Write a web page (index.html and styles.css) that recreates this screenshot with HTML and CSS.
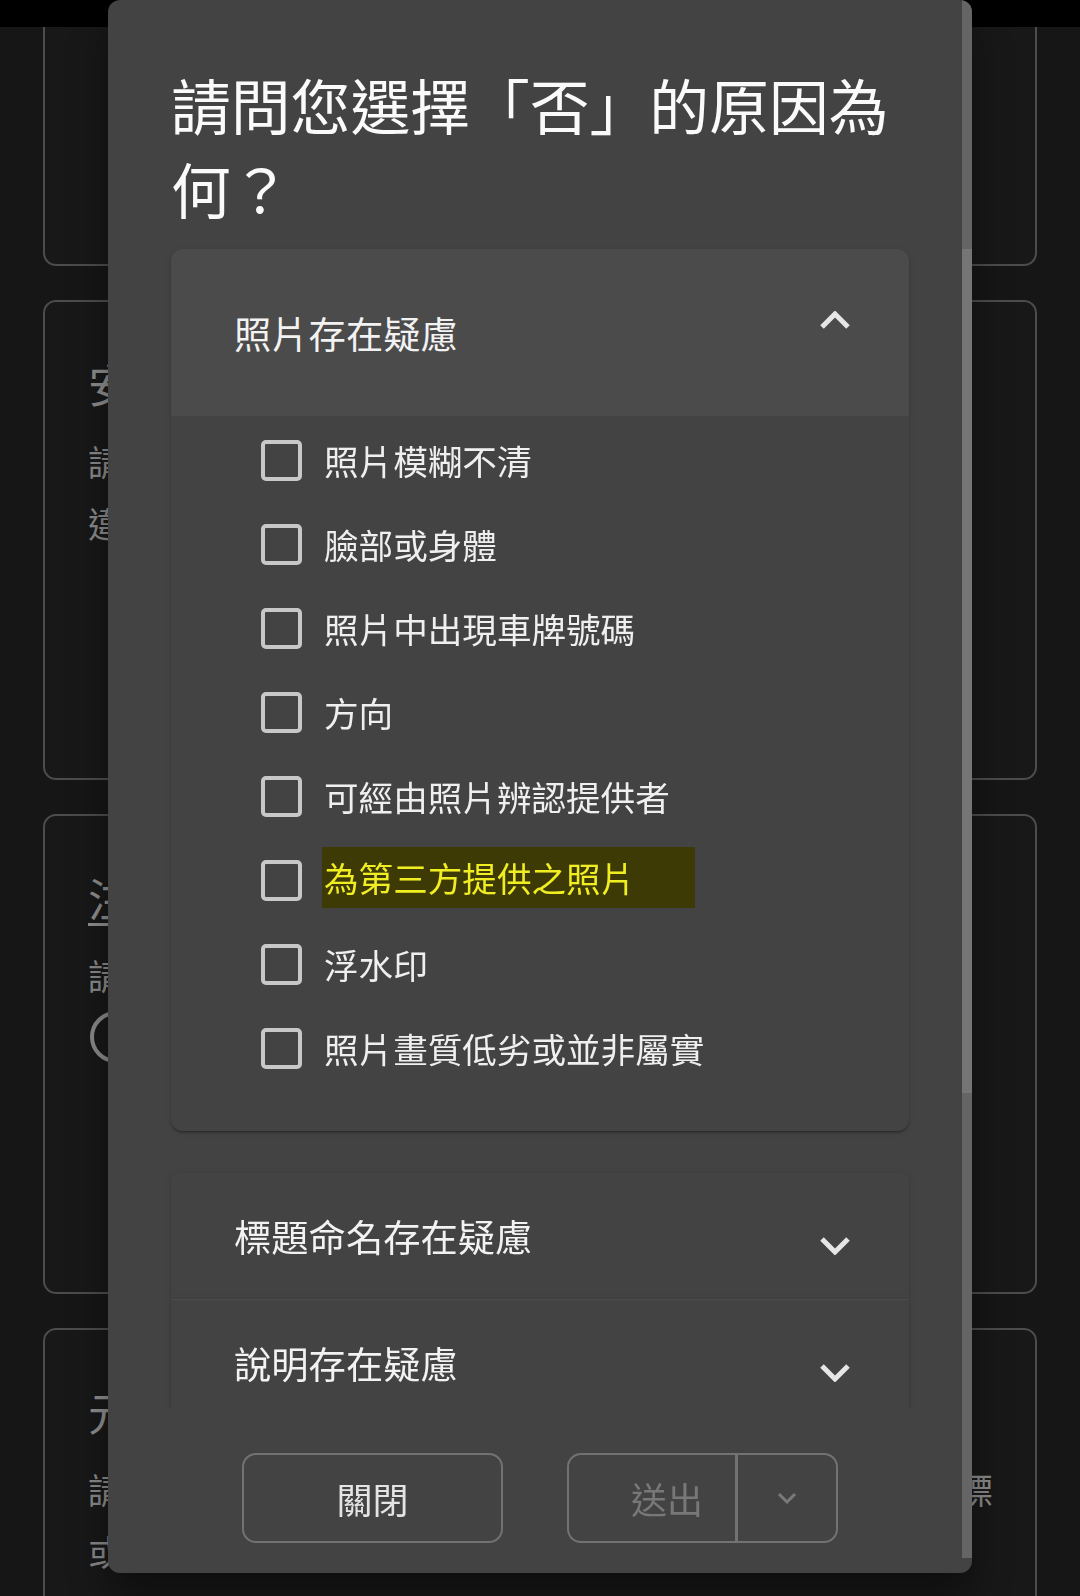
FILE: index.html
```html
<!DOCTYPE html>
<html lang="zh-Hant">
<head>
<meta charset="utf-8">
<title>請問您選擇「否」的原因為何？</title>
<link rel="stylesheet" href="styles.css">
</head>
<body>
<div class="statusbar"></div>
<main class="page">
  <section class="card card-first"></section>
  <section class="card card-mid">
    <h2 class="card-title">安全</h2>
    <p class="card-text">請確</p>
    <p class="card-text">違反</p>
  </section>
  <section class="card card-mid">
    <h2 class="card-title underline">注意</h2>
    <p class="card-text">請選</p>
    <span class="radio"></span>
  </section>
  <section class="card card-last">
    <h2 class="card-title">元件</h2>
    <p class="card-text split-row"><span>請確</span><span>標</span></p>
    <p class="card-text">或說</p>
  </section>
</main>

<div class="dialog" role="dialog">
  <div class="scrollbar"><div class="thumb"></div></div>
  <h1 class="dialog-title">請問您選擇「否」的原因為何？</h1>
  <div class="dialog-content">
    <div class="accordion expanded">
      <div class="acc-header">
        <span class="acc-label">照片存在疑慮</span>
        <svg class="chev chev-up" width="30" height="18" viewBox="0 0 30 18"><polyline points="2,16 15,3 28,16" fill="none" stroke="#e6e6e6" stroke-width="5"/></svg>
      </div>
      <div class="acc-details">
        <label class="option"><span class="box"></span><span class="opt-text">照片模糊不清</span></label>
        <label class="option"><span class="box"></span><span class="opt-text">臉部或身體</span></label>
        <label class="option"><span class="box"></span><span class="opt-text">照片中出現車牌號碼</span></label>
        <label class="option"><span class="box"></span><span class="opt-text">方向</span></label>
        <label class="option"><span class="box"></span><span class="opt-text">可經由照片辨認提供者</span></label>
        <label class="option"><span class="box"></span><span class="opt-text marked">為第三方提供之照片</span></label>
        <label class="option"><span class="box"></span><span class="opt-text">浮水印</span></label>
        <label class="option"><span class="box"></span><span class="opt-text">照片畫質低劣或並非屬實</span></label>
      </div>
    </div>
    <div class="acc-group">
      <div class="accordion">
        <div class="acc-header collapsed">
          <span class="acc-label">標題命名存在疑慮</span>
          <svg class="chev chev-down" width="30" height="18" viewBox="0 0 30 18"><polyline points="2,2 15,15 28,2" fill="none" stroke="#e6e6e6" stroke-width="5"/></svg>
        </div>
      </div>
      <div class="accordion divided">
        <div class="acc-header collapsed">
          <span class="acc-label">說明存在疑慮</span>
          <svg class="chev chev-down" width="30" height="18" viewBox="0 0 30 18"><polyline points="2,2 15,15 28,2" fill="none" stroke="#e6e6e6" stroke-width="5"/></svg>
        </div>
      </div>
    </div>
  </div>
  <div class="dialog-actions">
    <button class="btn btn-close">關閉</button>
    <div class="split">
      <button class="split-main">送出</button>
      <span class="split-divider"></span>
      <button class="split-menu"><svg width="20" height="12" viewBox="0 0 20 12"><polyline points="2,2 10,10 18,2" fill="none" stroke="#7a7a7a" stroke-width="3"/></svg></button>
    </div>
  </div>
</div>
</body>
</html>
```
FILE: styles.css
```css
* { box-sizing: border-box; }
html, body { margin: 0; padding: 0; }
body {
  width: 1080px;
  height: 1596px;
  overflow: hidden;
  background: #161616;
  font-family: "Noto Sans CJK TC", "Noto Sans", sans-serif;
  color: #8c8c8c;
}
.statusbar {
  position: fixed;
  left: 0; top: 0;
  width: 1080px;
  height: 27px;
  background: #000;
  z-index: 2;
}
.page {
  display: flex;
  flex-direction: column;
  gap: 34px;
  padding: 0 43px;
}
.card {
  border: 2px solid #4c4c4c;
  border-radius: 13px;
  background: #181818;
  padding: 50px 30px 0 43px;
}
.card-first { height: 266px; }
.card-mid { height: 480px; }
.card-last { height: 320px; }
.card-title {
  margin: 0 0 14px;
  font-size: 45px;
  line-height: 64px;
  font-weight: 400;
  color: #8e8e8e;
}
.card-title.underline {
  text-decoration: underline;
  text-decoration-thickness: 3px;
  text-underline-offset: 6px;
}
.card-text {
  margin: 0;
  font-size: 34.8px;
  line-height: 62px;
  color: #8a8a8a;
}
.card-text.split-row {
  display: flex;
  justify-content: space-between;
  padding-right: 12px;
}
.radio {
  display: block;
  width: 52px;
  height: 52px;
  margin: 5px 0 0 2px;
  border: 4.5px solid #8a8a8a;
  border-radius: 50%;
}

/* dialog */
.dialog {
  position: fixed;
  left: 108px;
  top: 0;
  width: 864px;
  height: 1573px;
  background: #434343;
  border-radius: 12px;
  z-index: 3;
  display: flex;
  flex-direction: column;
  overflow: hidden;
  box-shadow: 0 24px 38px rgba(0,0,0,0.4);
}
.scrollbar {
  position: absolute;
  right: 0; top: 0;
  width: 10px;
  height: 1558px;
  background: #656565;
}
.thumb {
  margin-top: 249px;
  height: 844px;
  background: #757575;
}
.dialog-title {
  margin: 0;
  padding: 62px 60px 0 63px;
  font-size: 59.8px;
  line-height: 84px;
  font-weight: 400;
  color: #fafafa;
}
.dialog-content {
  height: 1178px;
  padding: 19px 63px 0;
  overflow: hidden;
  flex: none;
}
.accordion {
  background: #434343;
  border-radius: 12px;
  box-shadow: 0 3px 3px -1px rgba(0,0,0,0.22), 0 1px 2px rgba(0,0,0,0.14), 0 1px 6px rgba(0,0,0,0.10);
}
.accordion.expanded { margin-bottom: 42px; }
.acc-group .accordion { border-radius: 0; }
.acc-group .accordion:first-child { border-radius: 6px 6px 0 0; }
.accordion.divided { border-top: 1px solid rgba(255,255,255,0.05); }
.acc-header {
  height: 167px;
  display: flex;
  align-items: center;
  justify-content: space-between;
  padding: 0 59px 0 63px;
  background: #4b4b4b;
  border-radius: 12px 12px 0 0;
}
.acc-header.collapsed {
  height: 126px;
  background: transparent;
}
.acc-label {
  font-size: 37.3px;
  line-height: 50px;
  color: #f2f2f2;
}
.chev { display: block; flex: none; }
.chev-up { margin-bottom: 26px; }
.chev-down { margin-top: 20px; }
.acc-details {
  padding: 2px 0 41px 90px;
  display: flex;
  flex-direction: column;
}
.option {
  height: 84px;
  display: flex;
  align-items: center;
}
.box {
  width: 41px;
  height: 41px;
  border: 4.6px solid #c8c8c8;
  border-radius: 5px;
  flex: none;
  margin-right: 22px;
}
.opt-text {
  font-size: 34.6px;
  line-height: 50px;
  color: #efefef;
}
.opt-text.marked {
  color: #f0ee22;
  background: #3d3a06;
  line-height: 61px;
  padding: 0 60px 0 2px;
  margin-left: -2px;
  margin-top: -5px;
}
.dialog-actions {
  flex: 1;
  display: flex;
  justify-content: center;
  align-items: flex-start;
  gap: 64px;
  padding-top: 45px;
}
.btn, .split {
  height: 90px;
  border: 2.6px solid #727272;
  border-radius: 14px;
  background: transparent;
}
.btn {
  width: 261px;
  font-family: inherit;
  font-size: 36px;
  color: #e4e4e4;
  padding: 0;
}
.split {
  width: 271px;
  display: flex;
  align-items: stretch;
}
.split-main {
  width: 166px;
  border: 0;
  background: transparent;
  font-family: inherit;
  font-size: 36px;
  color: #787878;
  padding: 0 0 0 30px;
}
.split-divider {
  width: 3px;
  background: #727272;
}
.split-menu {
  flex: 1;
  border: 0;
  background: transparent;
  display: flex;
  align-items: center;
  justify-content: center;
  padding: 0;
}
.split-menu svg { display: block; }
```
